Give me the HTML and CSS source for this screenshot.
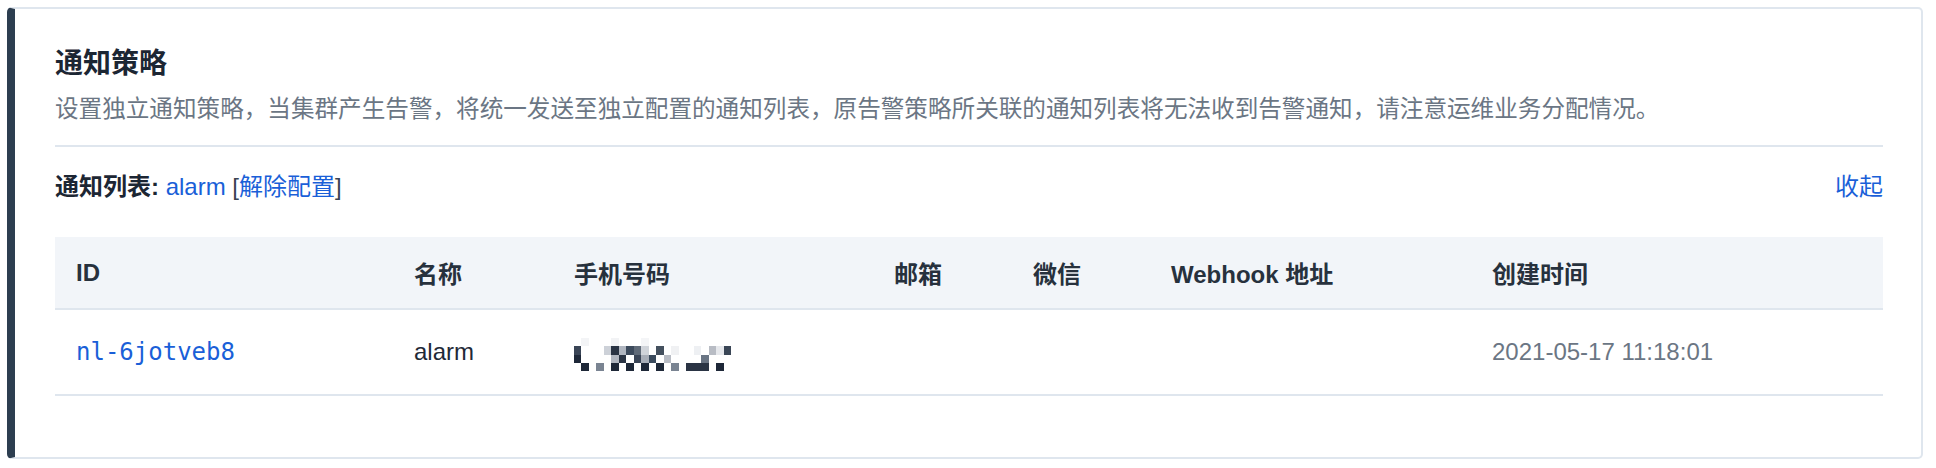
FILE: index.html
```html
<!DOCTYPE html>
<html lang="zh-CN">
<head>
<meta charset="utf-8">
<title>通知策略</title>
<link rel="stylesheet" href="styles.css">
</head>
<body>
<section class="card">
  <h2 class="title">通知策略</h2>
  <p class="desc">设置独立通知策略，当集群产生告警，将统一发送至独立配置的通知列表，原告警策略所关联的通知列表将无法收到告警通知，请注意运维业务分配情况。</p>
  <div class="divider"></div>
  <div class="list-bar">
    <div class="list-info"><span class="label">通知列表:</span> <a class="link">alarm</a> <span class="bracket">[</span><a class="link">解除配置</a><span class="bracket">]</span></div>
    <a class="link">收起</a>
  </div>
  <table class="tbl">
    <colgroup>
      <col class="c-id"><col class="c-name"><col class="c-phone"><col class="c-mail"><col class="c-wx"><col class="c-hook"><col class="c-time">
    </colgroup>
    <thead>
      <tr><th>ID</th><th>名称</th><th>手机号码</th><th>邮箱</th><th>微信</th><th>Webhook 地址</th><th>创建时间</th></tr>
    </thead>
    <tbody>
      <tr>
        <td><a class="link mono">nl-6jotveb8</a></td>
        <td>alarm</td>
        <td>
          <svg class="mosaic" viewBox="0 0 21 4" preserveAspectRatio="none" shape-rendering="crispEdges">
            <rect x="1" y="0" width="1" height="1" fill="#f3f4f6"/>
            <rect x="5" y="0" width="1" height="1" fill="#f2f3f5"/>
            <rect x="9" y="0" width="1" height="1" fill="#f4f5f7"/>
            <rect x="0" y="1" width="1" height="1" fill="#3a4556"/>
            <rect x="4" y="1" width="1" height="1" fill="#cdd1d8"/>
            <rect x="5" y="1" width="1" height="1" fill="#2a3444"/>
            <rect x="6" y="1" width="1" height="1" fill="#b0b6c0"/>
            <rect x="7" y="1" width="1" height="1" fill="#3c4a5c"/>
            <rect x="8" y="1" width="1" height="1" fill="#5f6a78"/>
            <rect x="9" y="1" width="1" height="1" fill="#d0d4da"/>
            <rect x="11" y="1" width="1" height="1" fill="#44505e"/>
            <rect x="13" y="1" width="1" height="1" fill="#f0f1f3"/>
            <rect x="16" y="1" width="1" height="1" fill="#eef0f3"/>
            <rect x="18" y="1" width="1" height="1" fill="#b8bcc4"/>
            <rect x="19" y="1" width="1" height="1" fill="#e6e8ec"/>
            <rect x="20" y="1" width="1" height="1" fill="#3a4656"/>
            <rect x="0" y="2" width="1" height="1" fill="#1e2838"/>
            <rect x="5" y="2" width="1" height="1" fill="#b0b6c0"/>
            <rect x="6" y="2" width="1" height="1" fill="#2a3444"/>
            <rect x="8" y="2" width="1" height="1" fill="#3a4556"/>
            <rect x="9" y="2" width="1" height="1" fill="#a8aeb8"/>
            <rect x="10" y="2" width="1" height="1" fill="#3a4a5c"/>
            <rect x="12" y="2" width="1" height="1" fill="#b8bcc4"/>
            <rect x="17" y="2" width="1" height="1" fill="#6a7584"/>
            <rect x="1" y="3" width="1" height="1" fill="#1e2838"/>
            <rect x="3" y="3" width="1" height="1" fill="#7a8492"/>
            <rect x="5" y="3" width="1" height="1" fill="#1e2838"/>
            <rect x="7" y="3" width="1" height="1" fill="#1e2838"/>
            <rect x="9" y="3" width="1" height="1" fill="#1e2838"/>
            <rect x="11" y="3" width="1" height="1" fill="#1e2838"/>
            <rect x="13" y="3" width="1" height="1" fill="#7a8492"/>
            <rect x="15" y="3" width="3" height="1" fill="#2a3444"/>
            <rect x="19" y="3" width="1" height="1" fill="#1e2838"/>
          </svg>
        </td>
        <td></td>
        <td></td>
        <td></td>
        <td class="muted">2021-05-17 11:18:01</td>
      </tr>
    </tbody>
  </table>
</section>
</body>
</html>
```

FILE: styles.css
```css
* { box-sizing: border-box; }

html, body {
  margin: 0;
  padding: 0;
  background: #ffffff;
}

body {
  font-family: "Liberation Sans", "Noto Sans CJK SC", sans-serif;
  color: #1f2937;
}

.card {
  width: 1916px;
  margin: 7px 0 0 7px;
  border: 2px solid #dfe6ee;
  border-left: 8px solid #2d3e50;
  border-radius: 5px;
  padding: 32px 38px 61px 40px;
  background: #ffffff;
}

.title {
  margin: 0;
  font-size: 28px;
  line-height: 40px;
  font-weight: 700;
  color: #1c2633;
  font-family: "Noto Sans CJK SC", sans-serif;
}

.desc {
  margin: 8px 0 0;
  font-size: 23.6px;
  line-height: 36px;
  color: #6b7684;
  font-family: "Noto Sans CJK SC", sans-serif;
}

.divider {
  height: 2px;
  background: #dfe6ee;
  margin-top: 20px;
}

.list-bar {
  display: flex;
  justify-content: space-between;
  align-items: center;
  margin-top: 22px;
  height: 36px;
  font-size: 24px;
  line-height: 36px;
}

.label {
  font-weight: 700;
  color: #1c2633;
}

.bracket {
  color: #3a4452;
}

.link {
  color: #1a5fd8;
  text-decoration: none;
  cursor: pointer;
}

.tbl {
  width: 100%;
  margin-top: 32px;
  border-collapse: collapse;
  table-layout: fixed;
  font-size: 24px;
}

.c-id { width: 338px; }
.c-name { width: 160px; }
.c-phone { width: 320px; }
.c-mail { width: 139px; }
.c-wx { width: 138px; }
.c-hook { width: 321px; }
.c-time { width: 412px; }

.tbl th {
  background: #f2f5f9;
  height: 72px;
  padding: 0 0 0 21px;
  text-align: left;
  font-weight: 700;
  color: #27313d;
  border-bottom: 2px solid #dfe6ee;
}

.tbl td {
  height: 86px;
  padding: 0 0 0 21px;
  color: #1f2937;
  border-bottom: 2px solid #dfe6ee;
  vertical-align: middle;
}

.mono {
  font-family: "DejaVu Sans Mono", monospace;
  font-size: 24px;
}

.tbl .muted {
  color: #6b7684;
}

.mosaic {
  display: block;
  width: 157px;
  height: 33px;
  margin-top: 4px;
}
```
